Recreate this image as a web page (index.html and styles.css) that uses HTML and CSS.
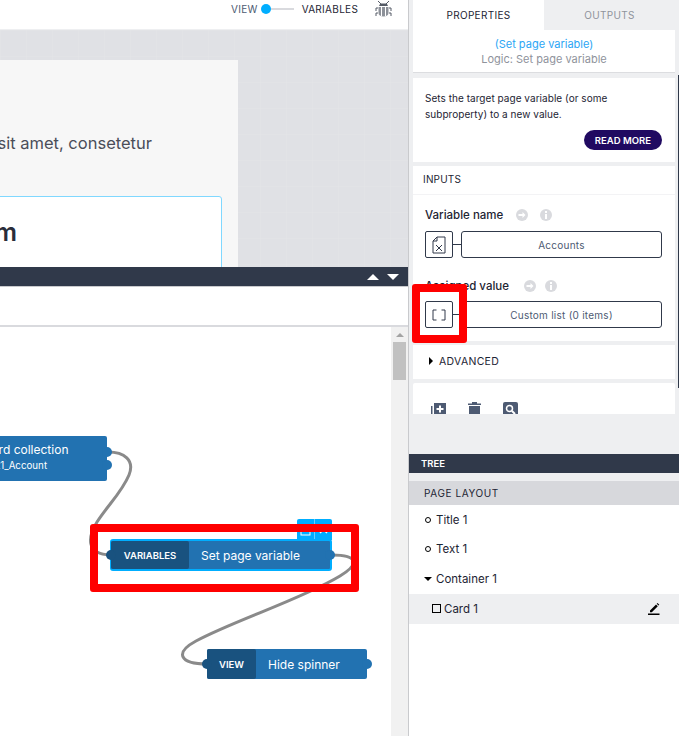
FILE: index.html
```html
<!DOCTYPE html>
<html lang="en">
<head>
    <meta charset="UTF-8">
    <title>Logic editor</title>
    <link rel="stylesheet" href="styles.css">
</head>
<body>
    <div class="app">
        <div class="left">
            <div class="topbar">
                <span class="mode">VIEW</span>
                <span class="toggle"><span class="knob"></span></span>
                <span class="mode dark">VARIABLES</span>
                <svg class="bug" width="17" height="16" viewBox="0 0 17 16">
                    <path d="M3 0l3 3h5l3-3M1 7h2M14 7h2M1 7v3M16 7v3M1 12h2M14 12h2M1 12v3M16 12v3" fill="none" stroke="#555b66" stroke-width="1"/>
                    <path d="M5 3h7l1 2H4z" fill="#555b66"/>
                    <path d="M3.5 6h10v6c0 2-2 3.500-5 3.500s-5-1.500-5-3.500z" fill="#8d9199"/>
                    <path d="M6.500 6v9M10.500 6v9" stroke="#fff" stroke-width="1"/>
                </svg>
            </div>
            <div class="canvas">
                <div class="preview">
                    <p class="preview-text">Lorem ipsum dolor sit amet, consetetur</p>
                    <div class="preview-card"><h2>Form</h2></div>
                </div>
            </div>
            <div class="darkbar">
                <span class="tri up"></span>
                <span class="tri down"></span>
            </div>
            <div class="toolbar"></div>
            <div class="editor">
                <svg class="wires" width="391" height="409" viewBox="0 327 391 409">
                    <path d="M108 452C124 452 135 460 129 475C122 492 108 505 97 522C86 540 88 554 110 555" fill="none" stroke="#8a8a8a" stroke-width="3"/>
                    <path d="M332 555C358 555 360 564 340 576C300 600 235 620 196 641C174 653 180 664 207 664" fill="none" stroke="#8a8a8a" stroke-width="3"/>
                </svg>

                <div class="node collection">
                    <div class="node-lines">
                        <span class="line-main">Record collection</span>
                        <span class="line-sub">Object1_Account</span>
                    </div>
                    <span class="dot dot-a"></span>
                    <span class="dot dot-b"></span>
                </div>

                <div class="node-tools">
                    <span class="tool">
                        <svg width="11" height="11" viewBox="0 0 11 11"><rect x="1" y="2" width="9" height="8" fill="none" stroke="#fff" stroke-width="1"/></svg>
                    </span>
                    <span class="tool">
                        <svg width="9" height="9" viewBox="0 0 9 9"><path d="M1 1l7 7M8 1L1 8" stroke="#fff" stroke-width="1.500"/></svg>
                    </span>
                </div>
                <div class="node selected setvar">
                    <span class="node-tag">VARIABLES</span>
                    <span class="node-title">Set page variable</span>
                    <span class="dot dot-l"></span>
                    <span class="dot dot-r"></span>
                </div>

                <div class="node hide">
                    <span class="node-tag">VIEW</span>
                    <span class="node-title">Hide spinner</span>
                    <span class="dot dot-l"></span>
                    <span class="dot dot-r"></span>
                </div>

                <div class="scrollbar">
                    <span class="scroll-arrow"></span>
                    <span class="scroll-thumb"></span>
                </div>
            </div>
            <span class="left-thumb"></span>
        </div>

        <div class="right">
            <div class="props">
                <div class="tabs">
                    <div class="tab active">PROPERTIES</div>
                    <div class="tab">OUTPUTS</div>
                </div>
                <div class="panel head">
                    <div class="head-link">(Set page variable)</div>
                    <div class="head-sub">Logic: Set page variable</div>
                </div>
                <div class="panel desc">
                    <p>Sets the target page variable (or some subproperty) to a new value.</p>
                    <div class="desc-foot"><button class="read-more">READ MORE</button></div>
                </div>
                <div class="panel inputs">
                    <div class="inputs-title">INPUTS</div>
                    <div class="inputs-body">
                        <div class="label-row">
                            <span class="label">Variable name</span>
                            <svg class="hint" width="12" height="12" viewBox="0 0 12 12"><circle cx="6" cy="6" r="6" fill="#d9dade"/><path d="M2.500 5h4V3l3 3-3 3V7h-4z" fill="#fff"/></svg>
                            <svg class="hint" width="12" height="12" viewBox="0 0 12 12"><circle cx="6" cy="6" r="6" fill="#d9dade"/><path d="M5 5h2v5H5zM5 2h2v2H5z" fill="#fff"/></svg>
                        </div>
                        <div class="field-row">
                            <span class="type-box">
                                <svg width="14" height="18" viewBox="0 0 14 18"><path d="M5 1h8v16H1V5zM5 1v4H1" fill="none" stroke="#30394a" stroke-width="1"/><path d="M4 9l6 6M10 9l-6 6" stroke="#30394a" stroke-width="1"/></svg>
                            </span>
                            <span class="link"></span>
                            <span class="field">Accounts</span>
                        </div>
                        <div class="label-row second">
                            <span class="label">Assigned value</span>
                            <svg class="hint" width="12" height="12" viewBox="0 0 12 12"><circle cx="6" cy="6" r="6" fill="#d9dade"/><path d="M2.500 5h4V3l3 3-3 3V7h-4z" fill="#fff"/></svg>
                            <svg class="hint" width="12" height="12" viewBox="0 0 12 12"><circle cx="6" cy="6" r="6" fill="#d9dade"/><path d="M5 5h2v5H5zM5 2h2v2H5z" fill="#fff"/></svg>
                        </div>
                        <div class="field-row">
                            <span class="type-box">
                                <svg width="14" height="12" viewBox="0 0 14 12"><path d="M4.500 1H1v10h3.500M9.500 1H13v10H9.500" fill="none" stroke="#30394a" stroke-width="1"/></svg>
                            </span>
                            <span class="link"></span>
                            <span class="field">Custom list (0 items)</span>
                        </div>
                    </div>
                </div>
                <div class="panel advanced">
                    <span class="adv-arrow"></span>
                    <span>ADVANCED</span>
                </div>
                <div class="panel actions">
                    <svg width="15" height="15" viewBox="0 0 15 15"><path d="M3 1h12v11H3z" fill="#4d5a72"/><path d="M0 4h1.500v9.500H12V15H0z" fill="#4d5a72"/><path d="M8 3.500h2v2.500h2.500v2H10v2.500H8V8H5.500V6H8z" fill="#fff"/></svg>
                    <svg width="13" height="15" viewBox="0 0 13 15"><path d="M0 1.500h4V0h5v1.500h4V3H0zM1 4h11v11H1z" fill="#4d5a72"/></svg>
                    <svg width="15" height="15" viewBox="0 0 15 15"><rect width="15" height="15" rx="2" fill="#4d5a72"/><circle cx="6.500" cy="6.500" r="3" fill="none" stroke="#fff" stroke-width="1.500"/><path d="M9 9l3 3" stroke="#fff" stroke-width="2"/></svg>
                </div>
            </div>
            <span class="right-thumb"></span>

            <div class="tree">
                <div class="tree-bar">TREE</div>
                <div class="tree-head">PAGE LAYOUT</div>
                <div class="tree-list">
                    <div class="tree-row"><span class="ring"></span>Title 1</div>
                    <div class="tree-row"><span class="ring"></span>Text 1</div>
                    <div class="tree-row"><span class="caret"></span>Container 1</div>
                    <div class="tree-row current">
                        <span class="square"></span>Card 1
                        <svg class="pencil" width="13" height="13" viewBox="0 0 13 13"><path d="M3 8.500L9 2.500l1.800 1.800-6 6H3zM9.700 1.800l.8-.8 1.800 1.800-.8.8zM1 11.500h11.500V13H1z" fill="#000"/></svg>
                    </div>
                </div>
            </div>
        </div>

        <!-- review markers painted over the shot -->
        <span class="marker marker-type"></span>
        <span class="marker marker-node"></span>
    </div>
</body>
</html>
```
FILE: styles.css
```css
* {
    box-sizing: border-box;
}
html, body {
    margin: 0;
    height: 100%;
    overflow: hidden;
}
body {
    font-family: Inter, 'Liberation Sans', sans-serif;
    color: #1d2433;
    background: #fff;
}
.app {
    position: relative;
    display: grid;
    grid-template-columns: 409px 270px;
    width: 679px;
    height: 736px;
    overflow: hidden;
}

/* left side */
.left {
    position: relative;
    display: flex;
    flex-direction: column;
    min-width: 0;
    overflow: hidden;
    border-right: 1px solid #c9cacd;
}
.left-thumb {
    position: absolute;
    top: 30px;
    right: -1px;
    width: 1px;
    height: 67px;
    background: #30394a;
}
.topbar {
    display: flex;
    align-items: center;
    flex: 0 0 30px;
    padding: 0 15px 11px 231px;
    background: #fff;
    border-bottom: 1px solid #eeeff1;
}
.mode {
    font-size: 10px;
    letter-spacing: 0.3px;
    color: #4d5a72;
}
.mode.dark {
    color: #1d2433;
}
.toggle {
    position: relative;
    width: 28px;
    height: 2px;
    margin: 0 8px;
    background: #d9dade;
}
.knob {
    position: absolute;
    left: -5px;
    top: -4px;
    width: 10px;
    height: 10px;
    border-radius: 50%;
    background: #00aeff;
}
.bug {
    margin-left: 17px;
}
.canvas {
    display: flex;
    justify-content: flex-end;
    flex: 0 0 237px;
    padding: 30px 170px 0 0;
    overflow: hidden;
    background-color: #e0e1e5;
    background-image:
        linear-gradient(rgba(255,255,255,0.05) 1px, transparent 1px),
        linear-gradient(90deg, rgba(255,255,255,0.05) 1px, transparent 1px);
    background-size: 26px 26px;
}
.preview {
    flex: 0 0 560px;
    padding: 70px 16px 0 0;
    background: #f7f7f7;
}
.preview-text {
    margin: 0 70px 0 0;
    font-size: 16.500px;
    line-height: 27px;
    color: #4a4d59;
    text-align: right;
    white-space: nowrap;
}
.preview-card {
    display: flex;
    justify-content: flex-end;
    height: 120px;
    margin-top: 39px;
    padding: 20px 204px 0 0;
    background: #fff;
    border: 1px solid #80d8ff;
    border-radius: 3px;
}
.preview-card h2 {
    margin: 0;
    font-size: 25px;
    font-weight: 600;
    line-height: 30px;
    color: #2a2d3a;
}
.darkbar {
    display: flex;
    justify-content: flex-end;
    align-items: center;
    gap: 8px;
    flex: 0 0 19px;
    padding: 0 9px 0 0;
    background: #30394a;
}
.tri {
    width: 0;
    height: 0;
    border-left: 6px solid transparent;
    border-right: 6px solid transparent;
}
.tri.up {
    border-bottom: 6px solid #fff;
}
.tri.down {
    border-top: 6px solid #fff;
}
.toolbar {
    flex: 0 0 41px;
    background: #fff;
    border-top: 1px solid #c9cacd;
    border-bottom: 2px solid #d9dade;
}
.editor {
    position: relative;
    flex: 1;
    background: #fff;
}
.wires {
    position: absolute;
    left: 0;
    top: 0;
}
.scrollbar {
    position: absolute;
    right: 0;
    top: 0;
    bottom: 0;
    width: 17px;
    padding: 0 2px;
    background: #f1f1f1;
}
.scroll-arrow {
    display: block;
    width: 0;
    height: 0;
    margin: 6px auto 5px;
    border-left: 4px solid transparent;
    border-right: 4px solid transparent;
    border-bottom: 4px solid #a3a3a3;
}
.scroll-thumb {
    display: block;
    height: 38px;
    margin-top: 0;
    background: #c1c1c1;
}

/* flow nodes sit on a free canvas */
.node {
    position: absolute;
    display: flex;
    align-items: stretch;
    color: #fff;
    background: #2272b1;
    border-radius: 2px;
}
.node-tag {
    display: flex;
    align-items: center;
    justify-content: center;
    font-size: 9.500px;
    font-weight: 600;
    background: #19527f;
    border-radius: 2px;
}
.node-title {
    display: flex;
    align-items: center;
    font-size: 12px;
}
.dot {
    position: absolute;
    width: 10px;
    height: 10px;
    border-radius: 50%;
    background: #19527f;
}
.dot-l {
    left: -5px;
    top: 50%;
    margin-top: -5px;
}
.dot-r {
    right: -5px;
    top: 50%;
    margin-top: -5px;
    background: #2272b1;
}
.collection {
    left: -30px;
    top: 109px;
    width: 137px;
    height: 45px;
}
.node-lines {
    display: flex;
    flex-direction: column;
    width: 137px;
    padding: 6px 0 0 0;
}
.line-main {
    font-size: 12px;
    line-height: 16px;
    white-space: nowrap;
}
.line-sub {
    font-size: 9.750px;
    line-height: 16px;
    white-space: nowrap;
}
.dot-a, .dot-b {
    right: -5px;
    background: #2272b1;
}
.dot-a {
    top: 11px;
}
.dot-b {
    top: 24px;
}
.setvar {
    left: 110px;
    top: 212px;
    width: 222px;
    height: 32px;
    border: 2px solid #00aeff;
    border-left-width: 1px;
    border-radius: 3px;
}
.setvar .node-tag {
    width: 78px;
}
.setvar .node-title {
    padding-left: 12px;
}
.hide {
    left: 207px;
    top: 322px;
    width: 160px;
    height: 30px;
}
.hide .node-tag {
    width: 49px;
}
.hide .node-title {
    padding-left: 12px;
}
.node-tools {
    position: absolute;
    left: 297px;
    top: 192px;
    display: flex;
    width: 35px;
    height: 21px;
    background: #00aeff;
    border-radius: 2px 2px 0 0;
}
.tool {
    display: flex;
    flex: 1;
    justify-content: center;
    padding-top: 6px;
}
.tool + .tool {
    border-left: 1px solid #66cfff;
}

/* right side */
.right {
    position: relative;
    display: flex;
    flex-direction: column;
    background: #eeeff1;
}
.right-thumb {
    position: absolute;
    right: 0;
    top: 75px;
    width: 1px;
    height: 313px;
    background: #30394a;
}
.props {
    flex: 0 0 414px;
    padding-left: 4px;
    padding-right: 4px;
    overflow: hidden;
}
.tabs {
    display: flex;
    height: 30px;
    margin-right: -4px;
}
.tab {
    display: flex;
    align-items: center;
    justify-content: center;
    flex: 1;
    padding-right: 4px;
    font-size: 10px;
    letter-spacing: 0.3px;
    color: #8f939c;
}
.tab.active {
    flex: 0 0 131px;
    padding-right: 0;
    color: #1d2433;
    background: #fff;
}
.panel {
    background: #fff;
}
.head {
    height: 43px;
    padding-top: 7px;
    text-align: center;
    font-size: 11px;
    line-height: 15px;
    border-bottom: 1px solid #dcdde0;
}
.head-link {
    color: #2ba6f5;
}
.head-sub {
    color: #8f939c;
}
.desc {
    height: 84px;
    margin-top: 5px;
    padding: 12px 13px 0 12px;
}
.desc p {
    width: 220px;
    margin: 0;
    font-size: 10px;
    line-height: 16px;
    letter-spacing: 0.04px;
    color: #1d2433;
}
.desc-foot {
    display: flex;
    justify-content: flex-end;
    margin-top: 8px;
}
.read-more {
    height: 20px;
    padding: 0 11px;
    border: none;
    border-radius: 10px;
    font-family: inherit;
    font-size: 9.500px;
    font-weight: 600;
    color: #fff;
    background: #200a61;
}
.inputs {
    height: 175px;
    margin-top: 4px;
}
.inputs-title {
    height: 29px;
    padding: 0 10px;
    font-size: 10px;
    line-height: 27px;
    letter-spacing: 0.2px;
    border-bottom: 1px solid #f3f3f5;
}
.inputs-body {
    padding: 11px 13px 0 12px;
}
.label-row {
    display: flex;
    align-items: center;
    gap: 12px;
    height: 18px;
    margin-bottom: 7px;
}
.label-row.second {
    gap: 9px;
    margin-top: 19px;
    margin-bottom: 6px;
}
.label {
    margin-right: 1px;
    font-size: 11.500px;
    font-weight: 500;
}
.label-row.second .label {
    margin-right: 6px;
}
.field-row {
    display: flex;
    align-items: center;
    height: 27px;
}
.type-box {
    display: flex;
    align-items: center;
    justify-content: center;
    flex: 0 0 28px;
    height: 27px;
    border: 1px solid #30394a;
    border-radius: 2px;
}
.link {
    flex: 0 0 8px;
    height: 1px;
    background: #30394a;
}
.field {
    display: flex;
    align-items: center;
    justify-content: center;
    flex: 1;
    height: 27px;
    font-size: 10px;
    letter-spacing: 0.25px;
    color: #4d5a72;
    border: 1px solid #30394a;
    border-radius: 3px;
}
.advanced {
    display: flex;
    align-items: center;
    gap: 6px;
    height: 34px;
    margin-top: 4px;
    padding: 0 0 2px 16px;
    font-size: 10.500px;
    letter-spacing: 0.3px;
}
.adv-arrow {
    width: 0;
    height: 0;
    border-top: 4px solid transparent;
    border-bottom: 4px solid transparent;
    border-left: 4px solid #000;
}
.actions {
    display: flex;
    gap: 22px;
    height: 40px;
    margin-top: 4px;
    padding: 19px 0 0 18px;
    border-radius: 2px;
}
.tree {
    flex: 1;
    margin-top: 40px;
}
.tree-bar {
    height: 19px;
    padding-left: 12px;
    font-size: 9.500px;
    font-weight: 600;
    line-height: 19px;
    color: #fff;
    background: #30394a;
}
.tree-head {
    height: 24px;
    margin-top: 8px;
    padding-left: 15px;
    font-size: 10px;
    line-height: 24px;
    letter-spacing: 0.6px;
    background: #d7d8dc;
}
.tree-list {
    height: 231px;
    background: #fff;
}
.tree-row {
    display: flex;
    align-items: center;
    height: 29.500px;
    padding-left: 16px;
    font-size: 11.500px;
}
.ring {
    width: 6px;
    height: 6px;
    margin-right: 5px;
    border: 1px solid #000;
    border-radius: 50%;
}
.caret {
    width: 0;
    height: 0;
    margin: 0 4px 0 -1px;
    border-left: 4px solid transparent;
    border-right: 4px solid transparent;
    border-top: 4px solid #000;
}
.current {
    justify-content: flex-start;
    height: 30px;
    padding: 0 19px 0 23px;
    background: #eeeff1;
}
.square {
    width: 9px;
    height: 9px;
    margin-right: 3px;
    border: 1px solid #000;
}
.pencil {
    margin-left: auto;
}

/* red review boxes */
.marker {
    position: absolute;
    border: 8px solid #ff0000;
    border-radius: 3px;
}
.marker-type {
    left: 412px;
    top: 284px;
    width: 55px;
    height: 59px;
}
.marker-node {
    left: 90px;
    top: 524px;
    width: 269px;
    height: 68px;
}
```
